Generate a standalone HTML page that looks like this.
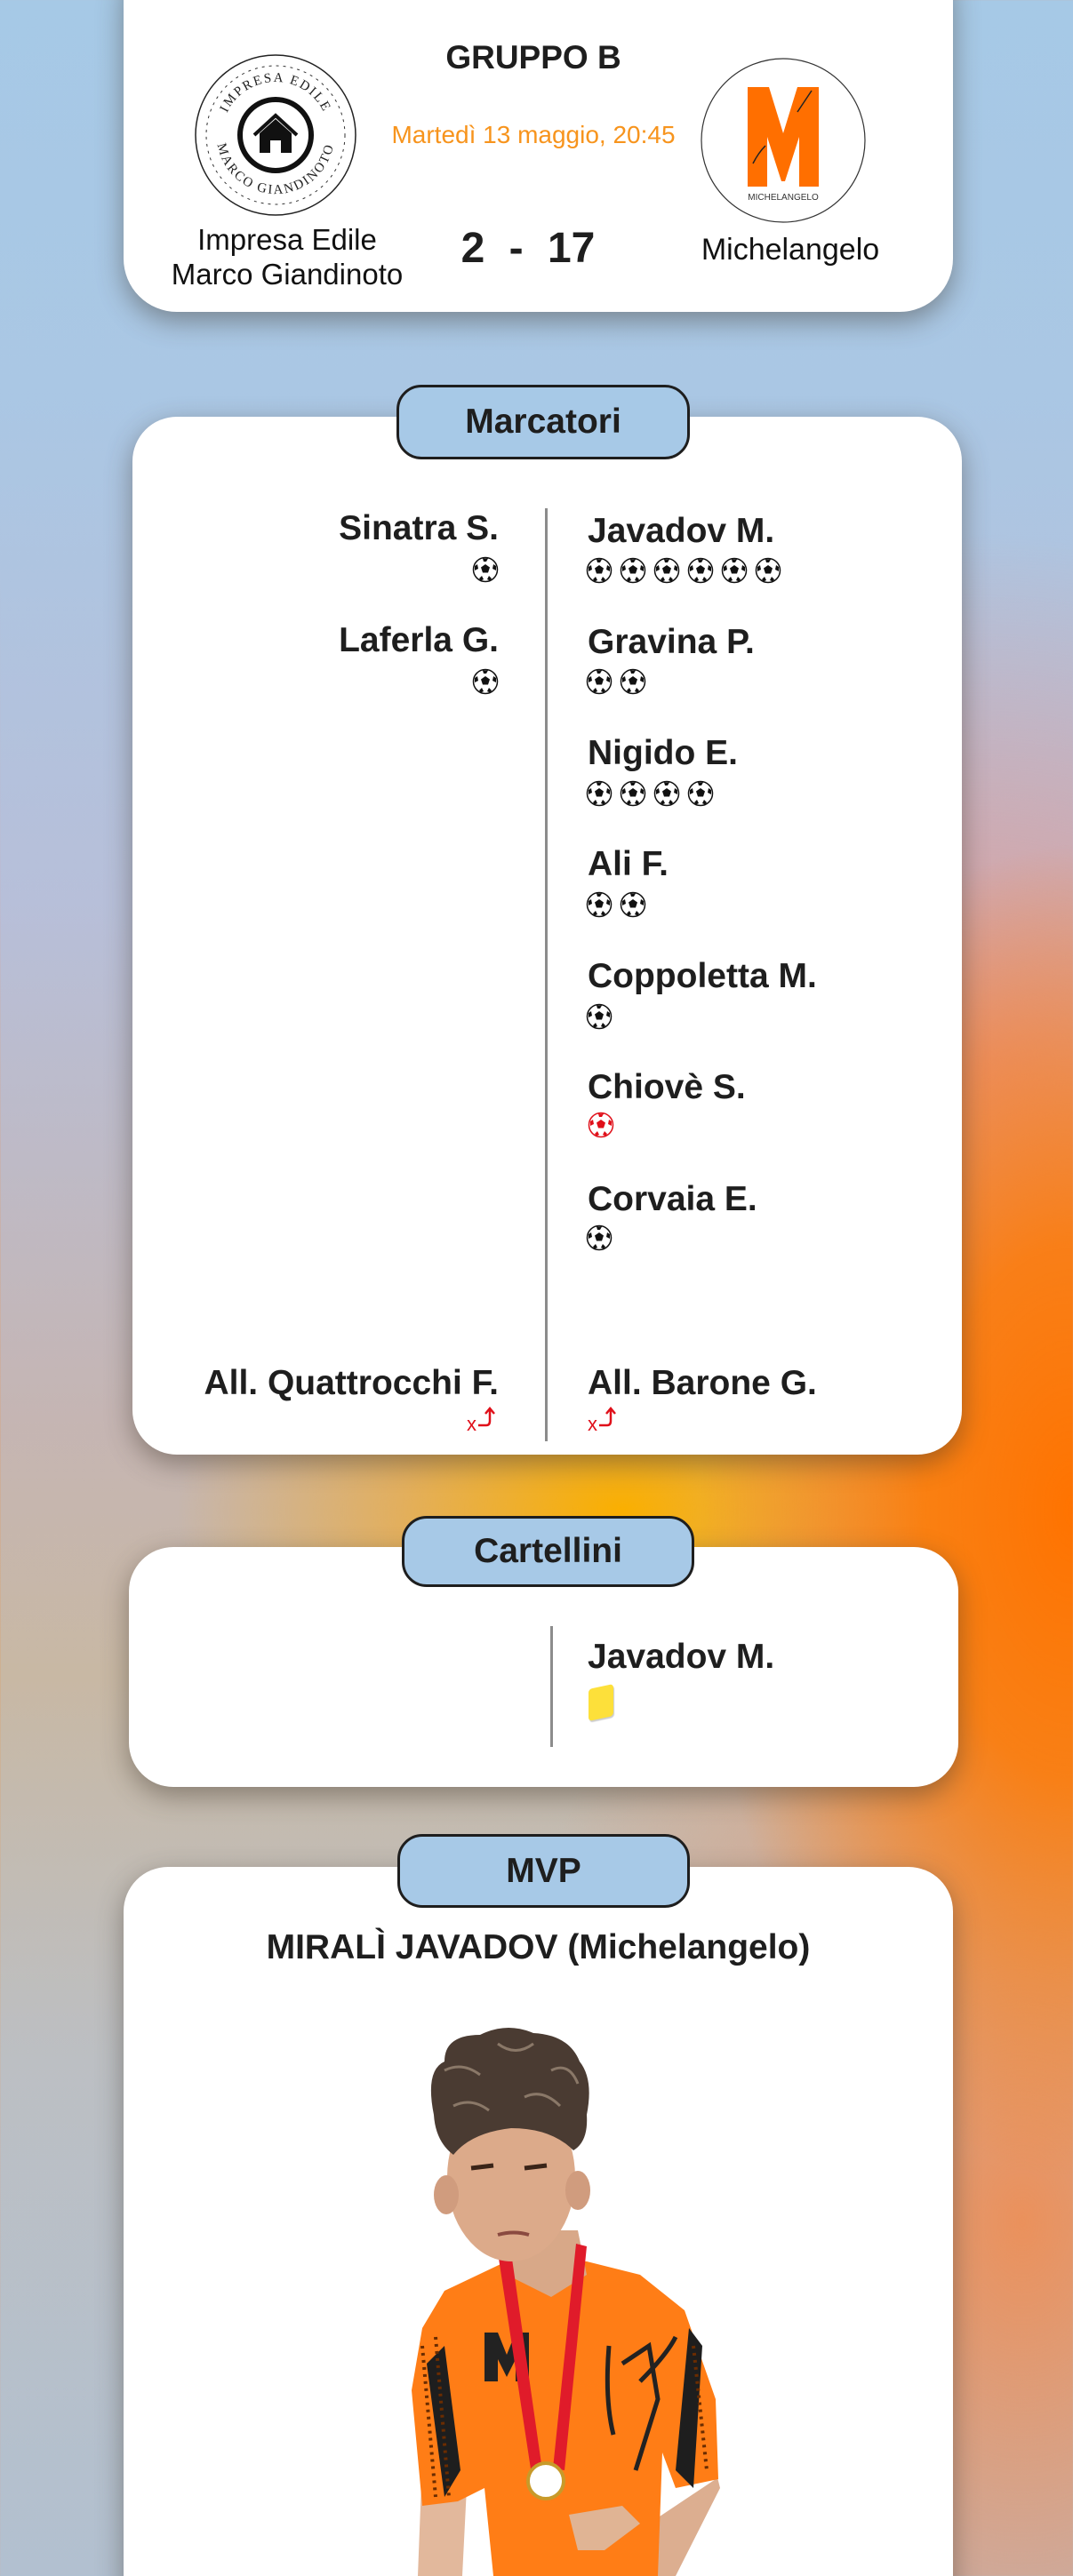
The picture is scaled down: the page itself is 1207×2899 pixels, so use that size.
<!DOCTYPE html>
<html><head><meta charset="utf-8">
<style>
*{margin:0;padding:0;box-sizing:border-box}
html,body{width:1207px;height:2899px;overflow:hidden}
body{position:relative;font-family:"Liberation Sans",sans-serif;color:#1e1e1e;font-weight:bold;
background:
radial-gradient(ellipse 420px 750px at 1207px 1700px, rgba(255,115,0,1) 0%, rgba(255,120,0,.85) 40%, rgba(255,130,30,0) 100%),
radial-gradient(ellipse 600px 900px at 1150px 2500px, rgba(240,140,80,.9) 0%, rgba(230,150,110,.5) 50%, rgba(230,150,110,0) 100%),
radial-gradient(ellipse 500px 300px at 700px 1700px, rgba(250,175,0,1) 0%, rgba(245,170,40,.6) 50%, rgba(240,170,60,0) 100%),
radial-gradient(ellipse 700px 600px at 1100px 1200px, rgba(240,140,120,.7) 0%, rgba(230,160,160,0) 100%),
linear-gradient(180deg,#a6c9e6 0%,#aac7e4 15%,#b7bfd9 35%,#c5b5b3 55%,#c8b8a4 65%,#bcbfc3 80%,#b2c0d0 100%);}
.card{position:absolute;background:#fff;box-shadow:0 10px 30px rgba(60,50,40,.45)}
.pill{position:absolute;background:#a7c9e7;border:3px solid #1e1e1e;border-radius:28px;text-align:center;font-size:39px;color:#1e1e1e}
.t{position:absolute;white-space:nowrap}
.r{text-align:right}
.nm{font-size:39px}
.vl{position:absolute;width:3px;background:#8c8c8c}
.balls{position:absolute;height:30px;display:flex;gap:8px}
.balls svg{width:30px;height:30px}
</style></head><body>
<svg width="0" height="0" style="position:absolute">
<defs>
<symbol id="ball" viewBox="0 0 30 30">
<circle cx="15" cy="15" r="13.5" fill="#fff" stroke="#111" stroke-width="1.5"/>
<polygon points="15,9 20,12.5 18,18.5 12,18.5 10,12.5" fill="#111"/>
<path d="M12,2.5 L18,2.5 L16,6 L13,6Z M3,11 L6,9 L7,14 L3,16Z M27,11 L24,9 L23,14 L27,16Z M8,25 L11,22 L13,26 L10,27.5Z M22,25 L19,22 L17,26 L20,27.5Z" fill="#111"/>
</symbol>
<symbol id="rball" viewBox="0 0 30 30">
<circle cx="15" cy="15" r="13.5" fill="#fff" stroke="#e0101a" stroke-width="1.5"/>
<polygon points="15,9 20,12.5 18,18.5 12,18.5 10,12.5" fill="#e0101a"/>
<path d="M12,2.5 L18,2.5 L16,6 L13,6Z M3,11 L6,9 L7,14 L3,16Z M27,11 L24,9 L23,14 L27,16Z M8,25 L11,22 L13,26 L10,27.5Z M22,25 L19,22 L17,26 L20,27.5Z" fill="#e0101a"/>
</symbol>
<symbol id="sub" viewBox="0 0 40 32">
<text x="0" y="30" font-family="Liberation Sans" font-size="22" fill="#e0101a" font-weight="normal">x</text>
<path d="M13,24 L22,24 Q26,24 26,19 L26,6 M21,11 L26,5 L31,11" fill="none" stroke="#e0101a" stroke-width="2.5"/>
</symbol>
</defs></svg>

<!-- Header card -->
<div class="card" style="left:139px;top:-60px;width:933px;height:411px;border-radius:60px"></div>
<div class="t" style="left:400px;top:44px;width:400px;text-align:center;font-size:37px">GRUPPO B</div>
<div class="t" style="left:380px;top:136px;width:440px;text-align:center;font-size:28px;color:#f7941d;font-weight:normal">Martedì 13 maggio, 20:45</div>
<svg style="position:absolute;left:218px;top:60px" width="184" height="184" viewBox="0 0 184 184">
<defs><path id="top" d="M32,92 A60,60 0 0 1 152,92"/><path id="bot" d="M26,92 A66,66 0 0 0 158,92"/></defs>
<circle cx="92" cy="92" r="90" fill="#fff" stroke="#222" stroke-width="1.5"/>
<circle cx="92" cy="92" r="78" fill="none" stroke="#333" stroke-width="1" stroke-dasharray="3 5"/>
<text font-family="Liberation Serif" font-size="15" fill="#222" font-weight="normal" letter-spacing="2"><textPath href="#top" startOffset="50%" text-anchor="middle">IMPRESA EDILE</textPath></text>
<text font-family="Liberation Serif" font-size="15" fill="#222" font-weight="normal" letter-spacing="2"><textPath href="#bot" startOffset="50%" text-anchor="middle">MARCO GIANDINOTO</textPath></text>
<circle cx="92" cy="92" r="40" fill="#fff" stroke="#111" stroke-width="6"/>
<path d="M68,92 L92,70 L116,92" fill="none" stroke="#111" stroke-width="4"/>
<path d="M74,90 L92,74 L110,90 L110,112 L98,112 L98,98 L86,98 L86,112 L74,112Z" fill="#111"/>
</svg>
<svg style="position:absolute;left:787px;top:64px" width="188" height="188" viewBox="0 0 188 188">
<circle cx="94" cy="94" r="92" fill="#fff" stroke="#333" stroke-width="1.2"/>
<path d="M54,34 L78,34 L94,86 L110,34 L134,34 L134,146 L112,146 L112,90 L96,140 L92,140 L76,90 L76,146 L54,146Z" fill="#ff6f00"/>
<path d="M110,62 Q118,50 126,38 M60,120 Q66,108 74,100" stroke="#222" stroke-width="1.5" fill="none"/>
<text x="94" y="161" text-anchor="middle" font-family="Liberation Sans" font-size="10" font-weight="normal" fill="#333">MICHELANGELO</text>
</svg>
<div class="t" style="left:153px;top:250px;width:340px;text-align:center;font-size:33px;line-height:39px;font-weight:normal;color:#111">Impresa Edile<br>Marco Giandinoto</div>
<div class="t" style="left:494px;top:252px;width:200px;text-align:center;font-size:48px;word-spacing:14px">2 - 17</div>
<div class="t" style="left:739px;top:262px;width:300px;text-align:center;font-size:34px;font-weight:normal;color:#111">Michelangelo</div>

<!-- Marcatori -->
<div class="card" style="left:149px;top:469px;width:933px;height:1168px;border-radius:50px"></div>
<div class="pill" style="left:446px;top:433px;width:330px;height:84px;line-height:78px">Marcatori</div>
<div class="vl" style="left:613px;top:572px;height:1050px"></div>

<div class="t r nm" style="right:646px;top:573px">Sinatra S.</div>
<div class="balls" style="left:531px;top:626px"><svg><use href="#ball"/></svg></div>
<div class="t r nm" style="right:646px;top:699px">Laferla G.</div>
<div class="balls" style="left:531px;top:752px"><svg><use href="#ball"/></svg></div>

<div class="t nm" style="left:661px;top:576px">Javadov M.</div>
<div class="balls" style="left:659px;top:627px;gap:8px"><svg><use href="#ball"/></svg><svg><use href="#ball"/></svg><svg><use href="#ball"/></svg><svg><use href="#ball"/></svg><svg><use href="#ball"/></svg><svg><use href="#ball"/></svg></div>
<div class="t nm" style="left:661px;top:701px">Gravina P.</div>
<div class="balls" style="left:659px;top:752px"><svg><use href="#ball"/></svg><svg><use href="#ball"/></svg></div>
<div class="t nm" style="left:661px;top:826px">Nigido E.</div>
<div class="balls" style="left:659px;top:878px"><svg><use href="#ball"/></svg><svg><use href="#ball"/></svg><svg><use href="#ball"/></svg><svg><use href="#ball"/></svg></div>
<div class="t nm" style="left:661px;top:951px">Ali F.</div>
<div class="balls" style="left:659px;top:1003px"><svg><use href="#ball"/></svg><svg><use href="#ball"/></svg></div>
<div class="t nm" style="left:661px;top:1077px">Coppoletta M.</div>
<div class="balls" style="left:659px;top:1129px"><svg><use href="#ball"/></svg></div>
<div class="t nm" style="left:661px;top:1202px">Chiovè S.</div>
<div class="balls" style="left:661px;top:1251px"><svg><use href="#rball"/></svg></div>
<div class="t nm" style="left:661px;top:1328px">Corvaia E.</div>
<div class="balls" style="left:659px;top:1378px"><svg><use href="#ball"/></svg></div>

<div class="t r nm" style="right:646px;top:1535px">All. Quattrocchi F.</div>
<svg style="position:absolute;left:525px;top:1580px" width="40" height="32"><use href="#sub"/></svg>
<div class="t nm" style="left:661px;top:1535px">All. Barone G.</div>
<svg style="position:absolute;left:661px;top:1580px" width="40" height="32"><use href="#sub"/></svg>

<!-- Cartellini -->
<div class="card" style="left:145px;top:1741px;width:933px;height:270px;border-radius:50px"></div>
<div class="pill" style="left:452px;top:1706px;width:329px;height:80px;line-height:74px">Cartellini</div>
<div class="vl" style="left:619px;top:1830px;height:136px"></div>
<div class="t nm" style="left:661px;top:1843px">Javadov M.</div>
<div style="position:absolute;left:662px;top:1898px;width:28px;height:36px;background:#fde03a;border-radius:4px;transform:skewY(-12deg);box-shadow:1px 2px 1px rgba(0,0,0,.2)"></div>

<!-- MVP -->
<div class="card" style="left:139px;top:2101px;width:933px;height:900px;border-radius:50px"></div>
<div class="pill" style="left:447px;top:2064px;width:329px;height:83px;line-height:77px">MVP</div>
<div class="t" style="left:139px;top:2170px;width:933px;text-align:center;font-size:39px">MIRALÌ JAVADOV (Michelangelo)</div>

<svg style="position:absolute;left:440px;top:2270px" width="400" height="629" viewBox="440 2270 400 629">
<path d="M478,2690 L470,2899 L520,2899 L530,2700Z" fill="#e2b89c"/>
<path d="M780,2680 L805,2790 L700,2860 L650,2899 L760,2899 L810,2800Z" fill="#dcae90"/>
<path d="M500,2578 L580,2540 L660,2545 L720,2560 L770,2600 L805,2700 L808,2790 L760,2800 L745,2760 L740,2899 L555,2899 L545,2800 L515,2815 L475,2820 L463,2690 L475,2620Z" fill="#ff7d16"/>
<path d="M480,2660 L500,2640 L518,2780 L500,2810Z M790,2640 L775,2620 L760,2780 L780,2800Z" fill="#1e1e1e"/>
<path d="M475,2640 L490,2810 M490,2630 L505,2810 M780,2640 L795,2780" stroke="#6a2c00" stroke-width="4" stroke-dasharray="3 5"/>
<path d="M545,2625 L560,2625 L570,2650 L580,2625 L595,2625 L595,2680 L580,2680 L580,2655 L570,2675 L560,2655 L560,2680 L545,2680Z" fill="#222"/>
<path d="M685,2640 Q680,2700 690,2740 M700,2660 L730,2640 L740,2700 L715,2780 M720,2680 Q750,2650 760,2630" stroke="#222" stroke-width="5" fill="none"/>
<path d="M560,2510 L650,2510 L660,2560 L620,2585 L570,2560Z" fill="#d8a888"/>
<path d="M560,2535 L575,2535 L610,2780 L598,2785Z M648,2525 L660,2528 L635,2780 L622,2778Z" fill="#e01b2a"/>
<circle cx="614" cy="2792" r="20" fill="#fff" stroke="#c89a2a" stroke-width="4"/>
<ellipse cx="575" cy="2450" rx="72" ry="95" fill="#dcaa8a"/>
<ellipse cx="502" cy="2470" rx="14" ry="22" fill="#d09c7e"/>
<ellipse cx="650" cy="2465" rx="14" ry="22" fill="#d09c7e"/>
<path d="M530,2440 L555,2437 M590,2440 L615,2437" stroke="#3a2418" stroke-width="5"/>
<path d="M560,2515 Q578,2510 595,2515" stroke="#8a4a40" stroke-width="4" fill="none"/>
<path d="M640,2830 L700,2820 L720,2840 L680,2870 L650,2870Z" fill="#e0b494"/>
<path d="M488,2380 Q478,2330 500,2320 Q500,2290 540,2290 Q570,2275 600,2288 Q640,2290 652,2320 Q668,2340 660,2380 Q662,2410 645,2420 Q620,2395 575,2395 Q530,2400 510,2425 Q490,2410 488,2380Z" fill="#4a3b32"/>
<path d="M500,2330 Q520,2320 540,2335 M560,2300 Q580,2315 600,2300 M620,2330 Q640,2320 650,2345 M510,2370 Q530,2360 550,2375 M590,2360 Q610,2350 630,2370" stroke="#8a7868" stroke-width="3" fill="none"/>
</svg>
</body></html>
